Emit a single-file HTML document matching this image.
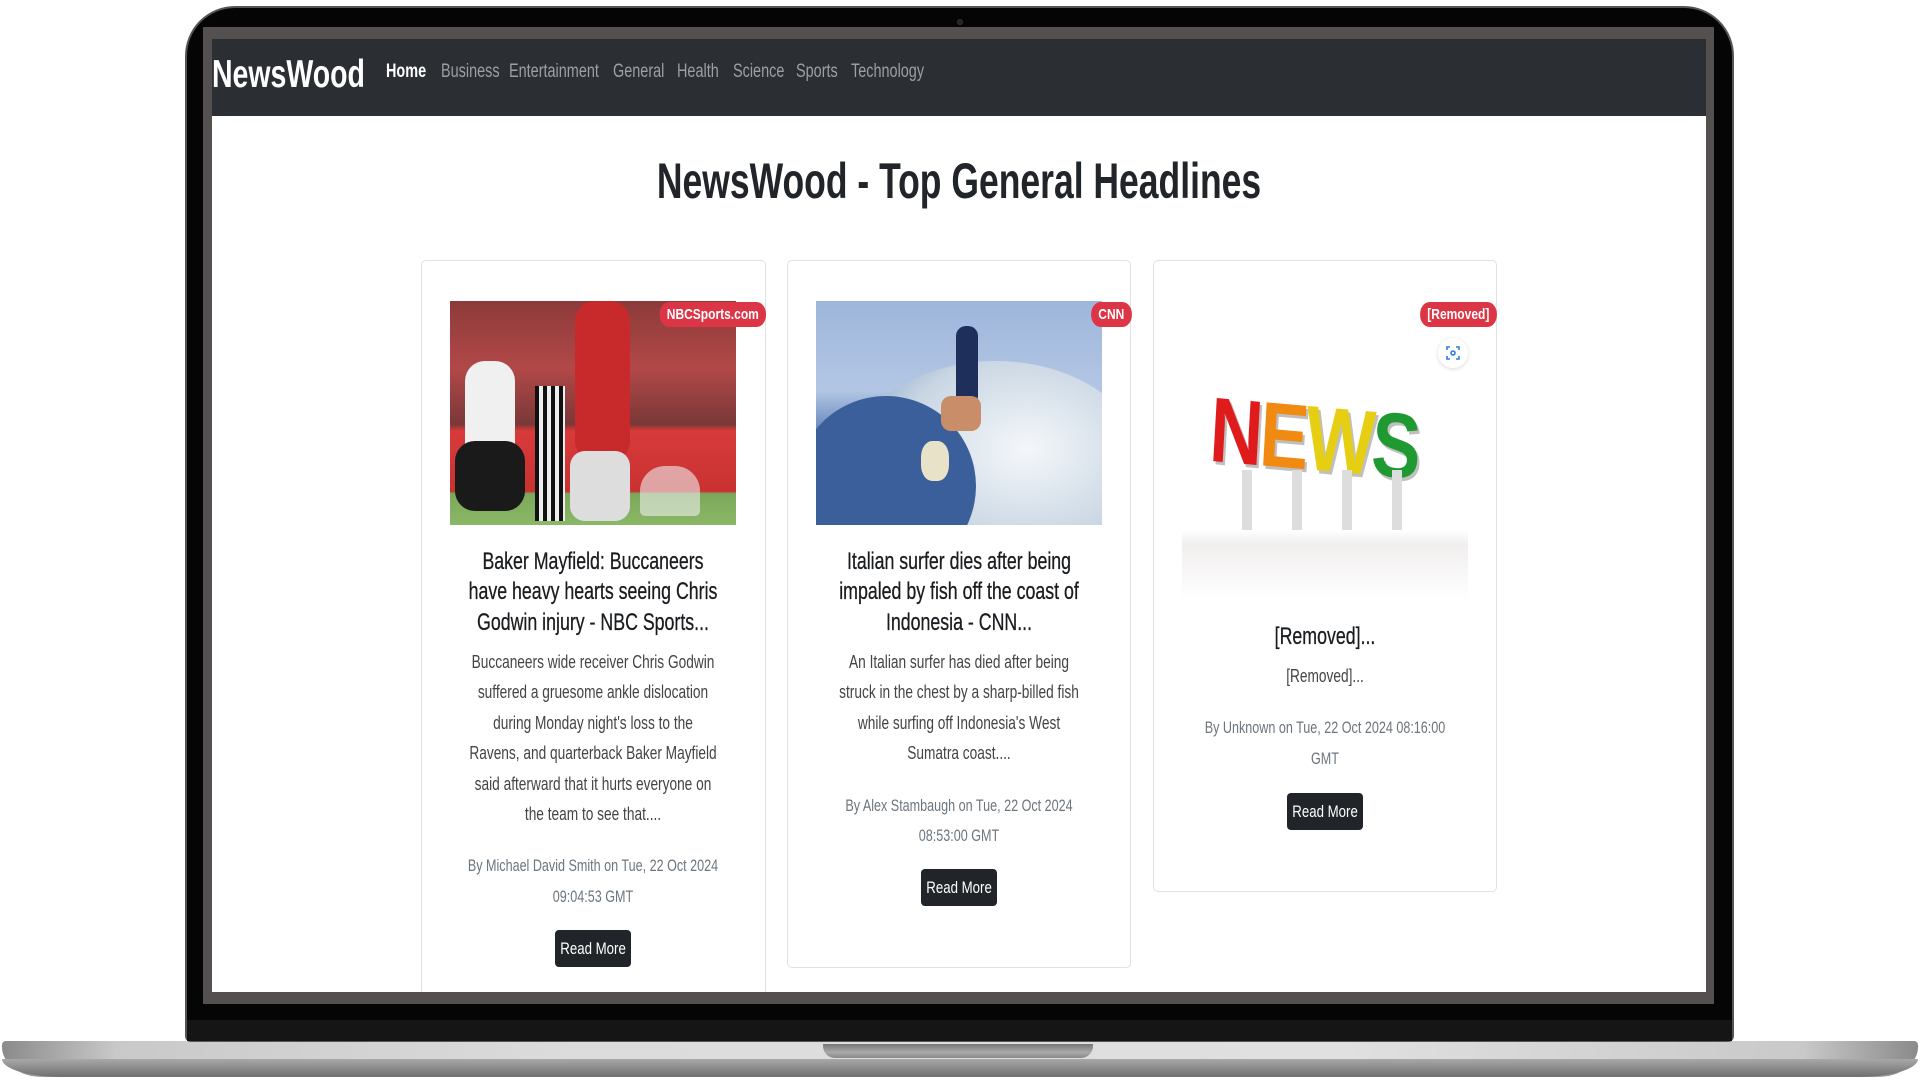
<!DOCTYPE html>
<html><head><meta charset="utf-8"><style>
*{margin:0;padding:0;box-sizing:border-box}
body{width:1920px;height:1080px;background:#fff;position:relative;overflow:hidden;font-family:"Liberation Sans",sans-serif}
.a{position:absolute}
.clip{position:absolute;left:0;top:0;width:1920px;height:1080px;clip-path:inset(39px 214px 88px 212px)}
.ln{position:absolute;white-space:nowrap;text-align:center;transform:translateX(-50%) scaleX(.74);line-height:1}
.nv{position:absolute;white-space:nowrap;transform-origin:left center;transform:scaleX(.76);font-size:19px;color:#9aa0a6;top:61px}
.card{position:absolute;background:#fff;border:1px solid #dee2e6;border-radius:5px}
.badge{position:absolute;background:#dc3545;color:#fff;font-weight:bold;font-size:15px;height:25px;line-height:25px;border-radius:12px;padding:0 9px;white-space:nowrap;transform:scaleX(.8);transform-origin:right center}
.btn{position:absolute;background:#212529;border-radius:4px;color:#fff;font-size:17px;height:37px;white-space:nowrap;display:flex;align-items:center;justify-content:center}
.btn span{display:block;flex:none;transform:scaleX(.78)}
.t{font-size:24px;color:#1a1d20;-webkit-text-stroke:.3px #1a1d20}
.d{font-size:18.5px;color:#444}
.b{font-size:17px;color:#6c757d}
</style></head><body>
<div class="a" style="left:2px;top:1041px;width:1916px;height:36px;border-radius:4px 4px 40px 40px/4px 4px 30px 30px;background:linear-gradient(90deg,#8a8a8a 0%,#c9c9c9 6%,#dcdcdc 30%,#e0e0e0 70%,#c9c9c9 94%,#8a8a8a 100%)"></div>
<div class="a" style="left:2px;top:1059px;width:1916px;height:18px;border-radius:0 0 60px 60px/0 0 18px 18px;background:linear-gradient(#a8a8a8,#6f6f6f)"></div>
<div class="a" style="left:823px;top:1044px;width:270px;height:14px;border-radius:0 0 12px 12px;background:linear-gradient(#777,#aaa 60%,#888)"></div>
<div class="a" style="left:185px;top:6px;width:1549px;height:1036px;background:#050505;border-radius:50px 50px 6px 6px;border:2px solid #555"></div>
<div class="a" style="left:187px;top:1020px;width:1545px;height:21px;background:#151515"></div>
<div class="a" style="left:957px;top:19px;width:6px;height:6px;border-radius:50%;background:#222;border:1px solid #333"></div>
<div class="a" style="left:203px;top:27px;width:1511px;height:977px;background:#555050"></div>
<div class="a" style="left:212px;top:39px;width:1494px;height:953px;background:#fff"></div>
<div class="clip">
<div class="a" style="left:212px;top:39px;width:1494px;height:77px;background:#2b2f33"></div>
<div class="a" style="left:212px;top:53px;font-size:39px;font-weight:bold;color:#fff;white-space:nowrap;transform-origin:left center;transform:scaleX(.73)">NewsWood</div>
<div class="nv" style="left:386px;color:#fff;font-weight:bold">Home</div>
<div class="nv" style="left:441px">Business</div>
<div class="nv" style="left:509px">Entertainment</div>
<div class="nv" style="left:613px">General</div>
<div class="nv" style="left:677px">Health</div>
<div class="nv" style="left:733px">Science</div>
<div class="nv" style="left:796px">Sports</div>
<div class="nv" style="left:851px">Technology</div>
<div class="ln" style="left:959px;top:156px;font-size:50px;font-weight:bold;color:#212529;transform:translateX(-50%) scaleX(.71)">NewsWood - Top General Headlines</div>

<div class="card" style="left:421px;top:260px;width:345px;height:760px"></div>
<div class="a" style="left:450px;top:301px;width:286px;height:224px;overflow:hidden;background:linear-gradient(180deg,#8d3a3a 0%,#b24848 30%,#7a3838 55%,#d83a3a 58%,#c93232 85%,#7aa85a 86%,#8bb866 100%)">
 <div class="a" style="left:15px;top:60px;width:50px;height:130px;background:#f0f0f0;border-radius:20px"></div>
 <div class="a" style="left:5px;top:140px;width:70px;height:70px;background:#1a1a1a;border-radius:20px"></div>
 <div class="a" style="left:85px;top:85px;width:30px;height:135px;background:repeating-linear-gradient(90deg,#111 0 4px,#eee 4px 8px)"></div>
 <div class="a" style="left:125px;top:0;width:55px;height:160px;background:#c8292b;border-radius:20px"></div>
 <div class="a" style="left:120px;top:150px;width:60px;height:70px;background:#ddd;border-radius:15px"></div>
 <div class="a" style="left:190px;top:165px;width:60px;height:50px;background:#eee;border-radius:25px 25px 5px 5px;opacity:.6"></div>
</div>
<div class="badge" style="right:1154px;top:302px">NBCSports.com</div>
<div class="ln t" style="left:593px;top:550px">Baker Mayfield: Buccaneers</div>
<div class="ln t" style="left:593px;top:580px">have heavy hearts seeing Chris</div>
<div class="ln t" style="left:593px;top:611px">Godwin injury - NBC Sports...</div>
<div class="ln d" style="left:593px;top:653px">Buccaneers wide receiver Chris Godwin</div>
<div class="ln d" style="left:593px;top:683px">suffered a gruesome ankle dislocation</div>
<div class="ln d" style="left:593px;top:714px">during Monday night's loss to the</div>
<div class="ln d" style="left:593px;top:744px">Ravens, and quarterback Baker Mayfield</div>
<div class="ln d" style="left:593px;top:775px">said afterward that it hurts everyone on</div>
<div class="ln d" style="left:593px;top:805px">the team to see that....</div>
<div class="ln b" style="left:593px;top:857px">By Michael David Smith on Tue, 22 Oct 2024</div>
<div class="ln b" style="left:593px;top:888px">09:04:53 GMT</div>
<div class="btn" style="left:555px;top:930px;width:76px"><span>Read More</span></div>

<div class="card" style="left:787px;top:260px;width:344px;height:708px"></div>
<div class="a" style="left:816px;top:301px;width:286px;height:224px;overflow:hidden;background:linear-gradient(180deg,#9eb6dc 0%,#b3c6e4 40%,#5d7fb5 60%,#2f4f86 100%)">
 <div class="a" style="left:30px;top:60px;width:300px;height:220px;border-radius:50% 50% 0 0;background:radial-gradient(ellipse at 60% 40%,#f4f7fa,#c9d6e3 50%,#7fa1c6 80%)"></div>
 <div class="a" style="left:-20px;top:95px;width:180px;height:180px;border-radius:50%;background:#3a5f9a"></div>
 <div class="a" style="left:140px;top:25px;width:22px;height:80px;background:#1d2f5a;border-radius:10px"></div>
 <div class="a" style="left:125px;top:95px;width:40px;height:35px;background:#c98d6a;border-radius:10px"></div>
 <div class="a" style="left:105px;top:140px;width:28px;height:40px;background:#e8e2c8;border-radius:40%"></div>
</div>
<div class="badge" style="right:789px;top:302px">CNN</div>
<div class="ln t" style="left:959px;top:550px">Italian surfer dies after being</div>
<div class="ln t" style="left:959px;top:580px">impaled by fish off the coast of</div>
<div class="ln t" style="left:959px;top:611px">Indonesia - CNN...</div>
<div class="ln d" style="left:959px;top:653px">An Italian surfer has died after being</div>
<div class="ln d" style="left:959px;top:683px">struck in the chest by a sharp-billed fish</div>
<div class="ln d" style="left:959px;top:714px">while surfing off Indonesia's West</div>
<div class="ln d" style="left:959px;top:744px">Sumatra coast....</div>
<div class="ln b" style="left:959px;top:797px">By Alex Stambaugh on Tue, 22 Oct 2024</div>
<div class="ln b" style="left:959px;top:827px">08:53:00 GMT</div>
<div class="btn" style="left:921px;top:869px;width:76px"><span>Read More</span></div>

<div class="card" style="left:1153px;top:260px;width:344px;height:632px"></div>
<div class="a" style="left:1182px;top:367px;width:286px;height:233px;background:linear-gradient(180deg,#fff 70%,#f1eeee 76%,#fff 100%)"></div>
<div class="a" style="left:1213px;top:378px;font-size:92px;font-weight:bold;white-space:nowrap;transform:scaleX(.8) rotate(4deg);transform-origin:left top;letter-spacing:-4px;text-shadow:3px 3px 0 rgba(0,0,0,.25)"><span style="color:#e01b1b">N</span><span style="color:#f08a10">E</span><span style="color:#e6cf12">W</span><span style="color:#1f9a32">S</span></div>
<div class="a" style="left:1230px;top:470px;width:200px;height:60px;background:repeating-linear-gradient(90deg,transparent 0 12px,#ddd 12px 22px,transparent 22px 50px)"></div>
<div class="badge" style="right:423px;top:302px">[Removed]</div>
<div class="a" style="left:1438px;top:338px;width:30px;height:30px;border-radius:50%;background:#fff;box-shadow:0 1px 4px rgba(0,0,0,.15)">
<svg width="30" height="30" viewBox="0 0 30 30" fill="none" stroke="#2f7de1" stroke-width="1.6"><path d="M9 12V9h3M18 9h3v3M21 18v3h-3M12 21H9v-3"/><circle cx="15" cy="15" r="2"/></svg></div>
<div class="ln t" style="left:1325px;top:625px">[Removed]...</div>
<div class="ln d" style="left:1325px;top:667px">[Removed]...</div>
<div class="ln b" style="left:1325px;top:719px">By Unknown on Tue, 22 Oct 2024 08:16:00</div>
<div class="ln b" style="left:1325px;top:750px">GMT</div>
<div class="btn" style="left:1287px;top:793px;width:76px"><span>Read More</span></div>
</div>
</body></html>
